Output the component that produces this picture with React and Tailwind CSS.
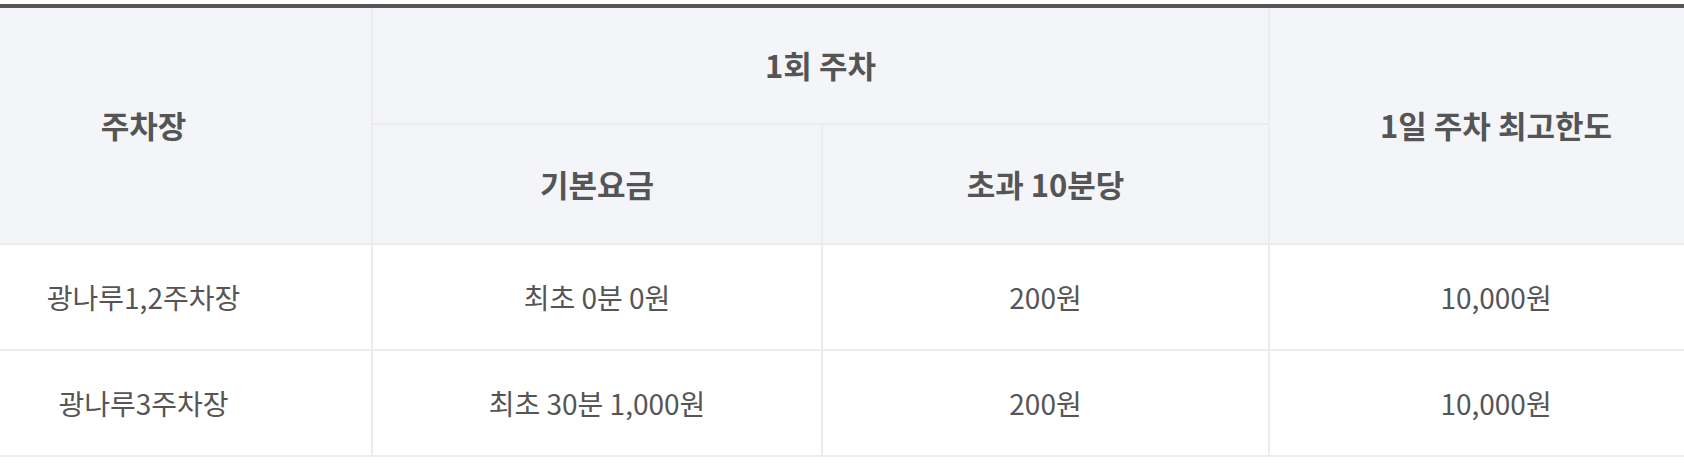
const rows = [
  { name: "광나루1,2주차장", base: "최초 0분 0원", extra: "200원", max: "10,000원" },
  { name: "광나루3주차장", base: "최초 30분 1,000원", extra: "200원", max: "10,000원" },
];

export default function App() {
  return (
    <div className="w-[1684px] h-[464px] bg-white pt-1" style={{ fontFamily: '"Noto Sans CJK KR", "Noto Sans", sans-serif' }}>
      <table className="w-[1684px] table-fixed border-collapse border-t-4 border-t-[#555555] text-[#555555]">
        <colgroup>
          <col className="w-[372px]" />
          <col className="w-[450px]" />
          <col className="w-[447px]" />
          <col className="w-[415px]" />
        </colgroup>
        <thead className="bg-[#f4f5f9] text-[31px] font-bold">
          <tr className="h-[118px]">
            <th rowSpan={2} className="border-2 border-l-0 border-t-0 border-[#ececec] pr-[84px] font-bold">주차장</th>
            <th colSpan={2} className="border-2 border-t-0 border-[#ececec] font-bold">1회 주차</th>
            <th rowSpan={2} className="border-2 border-r-0 border-t-0 border-[#ececec] pl-[38px] font-bold">1일 주차 최고한도</th>
          </tr>
          <tr className="h-[120px]">
            <th className="border-2 border-[#ececec] font-bold">기본요금</th>
            <th className="border-2 border-[#ececec] font-bold">초과 10분당</th>
          </tr>
        </thead>
        <tbody className="text-[28px]">
          {rows.map((r) => (
            <tr key={r.name} className="h-[106px]">
              <td className="border-2 border-l-0 border-[#ececec] pr-[84px] text-center">{r.name}</td>
              <td className="border-2 border-[#ececec] text-center">{r.base}</td>
              <td className="border-2 border-[#ececec] text-center">{r.extra}</td>
              <td className="border-2 border-r-0 border-[#ececec] pl-[38px] text-center">{r.max}</td>
            </tr>
          ))}
        </tbody>
      </table>
    </div>
  );
}
